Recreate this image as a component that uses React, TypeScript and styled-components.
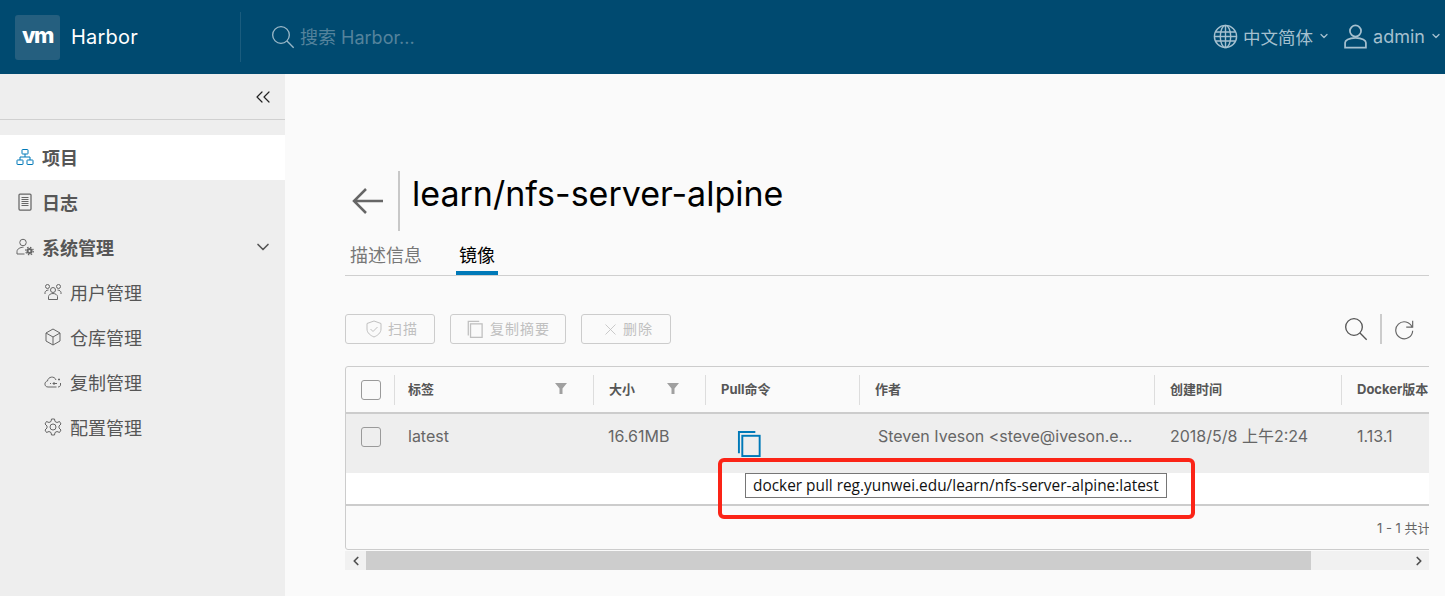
import React from 'react';
import styled, { createGlobalStyle } from 'styled-components';
import { ChevronDown, ChevronLeft, ChevronRight, ChevronsLeft } from 'lucide-react';

const GlobalStyle = createGlobalStyle`
	html, body {
		margin: 0;
		padding: 0;
		height: 596px;
		overflow: hidden;
		background: #fafafa;
		font-family: Inter, 'Noto Sans CJK SC', sans-serif;
	}
`;

type IconProps = { size?: number; color?: string };

const Line: React.FC<IconProps & { children: React.ReactNode; box?: number }> = ({
	size = 18,
	color = '#666',
	box = 36,
	children,
}) => (
	<svg width={size} height={size} viewBox={`0 0 ${box} ${box}`} fill="none" stroke={color} strokeWidth={2}>
		{children}
	</svg>
);

const SearchIcon: React.FC<IconProps> = (p) => (
	<Line {...p}>
		<circle cx="15" cy="15" r="12.5" />
		<path d="M24 24l10 10" />
	</Line>
);

const GlobeIcon: React.FC<IconProps> = (p) => (
	<Line {...p}>
		<circle cx="18" cy="18" r="16" />
		<ellipse cx="18" cy="18" rx="7.5" ry="16" />
		<path d="M18 2v32M3.5 11.5h29M3.5 24.5h29M2 18h32" />
	</Line>
);

const UserIcon: React.FC<IconProps> = (p) => (
	<Line {...p}>
		<circle cx="18" cy="10" r="8" strokeWidth={2.500} />
		<path d="M3 34v-7c0-3 5-7 15-7s15 4 15 7v7z" strokeWidth={2.500} />
	</Line>
);

const ProjectIcon: React.FC<IconProps> = (p) => (
	<Line {...p}>
		<rect x="12" y="3" width="12" height="9" rx="1" />
		<rect x="2" y="24" width="12" height="9" rx="1" />
		<rect x="22" y="24" width="12" height="9" rx="1" />
		<path d="M18 12v6M8 24v-6h20v6" />
	</Line>
);

const LogIcon: React.FC<IconProps> = (p) => (
	<Line {...p}>
		<rect x="6" y="2" width="24" height="32" rx="2" strokeWidth={2.500} />
		<path d="M11 9h14M11 13h14M11 17h14M11 21h14M11 25h14" />
	</Line>
);

const AdminIcon: React.FC<IconProps> = (p) => (
	<Line {...p}>
		<circle cx="14" cy="9" r="6.500" />
		<path d="M2 32v-5c0-5 6-8.500 13-8.500M2 32h15" />
		<circle cx="27" cy="26" r="4" strokeWidth={4} />
		<circle cx="27" cy="26" r="7.500" strokeDasharray="3 2.900" strokeWidth={2.500} />
	</Line>
);

const UsersIcon: React.FC<IconProps> = (p) => (
	<Line {...p}>
		<circle cx="18" cy="14" r="5" />
		<circle cx="7" cy="7" r="4" />
		<circle cx="29" cy="7" r="4" />
		<path d="M9 33v-6c0-3 4-6 9-6s9 3 9 6v6zM2 22v-3c0-2 3-5 7-5M34 22v-3c0-2-3-5-7-5" />
	</Line>
);

const BoxIcon: React.FC<IconProps> = (p) => (
	<Line {...p}>
		<path d="M18 2l14 8v16l-14 8-14-8V10zM4 10l14 8 14-8M18 18v16" />
	</Line>
);

const CloudIcon: React.FC<IconProps> = (p) => (
	<Line {...p}>
		<path d="M25 28H8c-8 0-8-11-1-12 1-9 14-11 17-2M30 15v-4M28 13h4" />
		<path d="M33 20v4c0 2-2 4-5 4M26 21h-8M21 18l-3 3 3 3M12 21h2" />
	</Line>
);

const GearIcon: React.FC<IconProps> = (p) => (
	<Line {...p}>
		<circle cx="18" cy="18" r="6" />
		<path d="M15 2h6l1 5 4 2 5-2 3 5-4 4v4l4 4-3 5-5-2-4 2-1 5h-6l-1-5-4-2-5 2-3-5 4-4v-4l-4-4 3-5 5 2 4-2z" />
	</Line>
);

const ArrowIcon: React.FC<IconProps> = (p) => (
	<svg width={p.size} height={p.size} viewBox="0 0 32 32" fill="none" stroke={p.color} strokeWidth={2.500}>
		<path d="M31 16H2M14 4L2 16l12 12" />
	</svg>
);

const ShieldIcon: React.FC<IconProps> = (p) => (
	<Line {...p}>
		<path d="M18 2l14 5v11c0 8-7 13-14 16C11 31 4 26 4 18V7z" />
		<path d="M11 18l5 5 9-9" />
	</Line>
);

const CopyIcon: React.FC<IconProps> = (p) => (
	<Line {...p} box={28}>
		<path d="M2 24V2h17" />
		<rect x="5.500" y="6" width="18" height="21" />
	</Line>
);

const CloseIcon: React.FC<IconProps> = (p) => (
	<Line {...p}>
		<path d="M6 6l24 24M30 6L6 30" />
	</Line>
);

const RefreshIcon: React.FC<IconProps> = (p) => (
	<Line {...p}>
		<path d="M31 14A14.500 14.500 0 1 0 32 20" />
		<path d="M32 3v11H21" />
	</Line>
);

const FilterIcon: React.FC = () => (
	<svg width={12} height={11} viewBox="0 0 12 11" fill="#a0a0a0">
		<path d="M0 0h12L7.500 5.500V11h-3V5.500z" />
	</svg>
);

const Page = styled.div`
	width: 1445px;
	height: 596px;
	display: flex;
	flex-direction: column;
	position: relative;
	overflow: hidden;
`;

const Header = styled.header`
	height: 74px;
	flex: none;
	background: #004a70;
	display: flex;
	align-items: center;
`;

const Brand = styled.div`
	width: 225px;
	padding-left: 15px;
	height: 50px;
	display: flex;
	align-items: center;
	gap: 11px;
	border-right: 1px solid #1a5c7e;
	box-sizing: content-box;
	color: #fff;
	font-size: 20px;
	letter-spacing: 0.200px;
`;

const LogoBox = styled.div`
	width: 45px;
	height: 45px;
	border-radius: 3px;
	background: #255f7f;
	display: flex;
	align-items: center;
	justify-content: center;
	color: #fff;
`;

const Search = styled.div`
	margin-left: 30px;
	padding-bottom: 2px;
	display: flex;
	align-items: center;
	gap: 5px;
	flex: 1;
	color: #55839c;
	font-size: 18px;
`;

const SearchGlass = styled.span`
	display: flex;
	margin-top: 2px;
`;

const HeaderMenu = styled.div<{ $gap: number; $right: number; $size: number }>`
	display: flex;
	align-items: center;
	gap: ${(p) => p.$gap}px;
	margin-right: ${(p) => p.$right}px;
	padding-bottom: 2px;
	color: #a5c0cf;
	font-size: ${(p) => p.$size}px;
`;

const Body = styled.div`
	flex: 1;
	display: flex;
	min-height: 0;
`;

const Sidebar = styled.aside`
	width: 285px;
	flex: none;
	background: #eeeeee;
`;

const Collapse = styled.div`
	height: 45px;
	border-bottom: 1px solid #d0d0d0;
	margin-bottom: 15px;
	display: flex;
	align-items: center;
	justify-content: flex-end;
	padding-right: 10px;
	color: #222;
`;

const NavItem = styled.div<{ $active?: boolean; $sub?: boolean }>`
	height: 45px;
	box-sizing: border-box;
	padding-bottom: 2px;
	display: flex;
	align-items: center;
	gap: 8px;
	padding-left: ${(p) => (p.$sub ? 44 : 16)}px;
	padding-right: 12px;
	background: ${(p) => (p.$active ? '#fff' : 'transparent')};
	color: #565656;
	font-size: 18px;
	font-weight: ${(p) => (p.$sub ? 400 : 700)};
`;

const NavGrow = styled.span`
	flex: 1;
`;

const Main = styled.main`
	flex: 1;
	min-width: 0;
	padding: 96px 16px 0 60px;
`;

const TitleRow = styled.div`
	height: 61px;
	display: flex;
	align-items: center;
	padding-left: 7px;
`;

const TitleDivider = styled.div`
	width: 2px;
	height: 60px;
	background: #c8c8c8;
	margin: 0 12px 0 14px;
`;

const Title = styled.h1`
	margin: 0 0 14px;
	font-size: 34px;
	font-weight: 400;
	color: #000;
	letter-spacing: 0;
`;

const Tabs = styled.div`
	height: 35px;
	margin-top: 9px;
	display: flex;
	gap: 26px;
	padding-left: 5px;
	border-bottom: 1px solid #cfcfcf;
`;

const Tab = styled.div<{ $active?: boolean }>`
	height: 35px;
	box-sizing: border-box;
	padding: 0 ${(p) => (p.$active ? 3 : 0)}px;
	margin-left: ${(p) => (p.$active ? 8 : 0)}px;
	font-size: 18px;
	line-height: 31px;
	color: ${(p) => (p.$active ? '#000' : '#777')};
	border-bottom: ${(p) => (p.$active ? '4px solid #0079b8' : 'none')};
`;

const Toolbar = styled.div`
	height: 30px;
	margin-top: 38px;
	display: flex;
	align-items: center;
	gap: 15px;
`;

const ActionButton = styled.button<{ $left: number; $right: number }>`
	height: 30px;
	padding: 0 ${(p) => p.$right}px 0 ${(p) => p.$left}px;
	box-sizing: border-box;
	display: flex;
	align-items: center;
	gap: 5px;
	background: transparent;
	border: 1px solid #cccccc;
	border-radius: 3px;
	font-family: inherit;
	font-size: 14px;
	letter-spacing: 1px;
	color: #c0c0c0;
`;

const ActionLabel = styled.span`
	margin-top: -3px;
`;

const ToolbarEnd = styled.div`
	margin-left: auto;
	display: flex;
	align-items: center;
	padding-right: 14px;
	gap: 12px;
`;

const ToolbarDivider = styled.div`
	width: 2px;
	height: 30px;
	background: #cccccc;
`;

const TableClip = styled.div`
	margin-top: 22px;
	overflow: hidden;
`;

const Card = styled.div`
	width: 1300px;
	height: 182px;
	border: 1px solid #cccccc;
	border-radius: 3px;
	display: flex;
	flex-direction: column;
`;

const COLUMNS = '48px 199px 112px 154px 295px 187px 1fr';

const HeadRow = styled.div`
	height: 45px;
	flex: none;
	display: grid;
	grid-template-columns: ${COLUMNS};
	align-items: center;
	border-bottom: 2px solid #cccccc;
`;

const HeadCell = styled.div<{ $first?: boolean }>`
	height: 30px;
	padding-bottom: 2px;
	display: flex;
	align-items: center;
	justify-content: space-between;
	box-sizing: border-box;
	padding-right: 26px;
	padding-left: ${(p) => (p.$first ? 13 : 15)}px;
	border-left: 1px solid #dddddd;
	font-size: 13px;
	font-weight: 700;
	color: #565656;
	white-space: nowrap;
`;

const CheckCell = styled.div`
	display: flex;
	justify-content: flex-start;
	padding-left: 15px;
`;

const CheckBox = styled.div`
	width: 20px;
	height: 20px;
	box-sizing: border-box;
	border: 1px solid #9a9a9a;
	border-radius: 3px;
`;

const DataRow = styled(HeadRow)`
	height: 59px;
	align-items: flex-start;
	background: #eeeeee;
	border-bottom: none;
	padding-top: 13px;
	box-sizing: border-box;
	font-size: 16px;
	color: #666;
	white-space: nowrap;
`;

const DataCell = styled.div<{ $inset?: number }>`
	padding-left: ${(p) => p.$inset ?? 16}px;
	line-height: 18px;
`;

const IconCell = styled(DataCell)`
	padding-top: 3px;
	line-height: 0;
`;

const BlankRow = styled.div`
	height: 31px;
	flex: none;
	background: #fff;
	border-bottom: 2px solid #cccccc;
`;

const TableFooter = styled.div`
	flex: 1;
	display: flex;
	align-items: center;
	padding-left: 1031px;
	font-size: 13px;
	color: #666;
	white-space: nowrap;
`;

const ScrollBar = styled.div`
	height: 19px;
	margin-top: 1px;
	display: flex;
	background: #f1f1f1;
`;

const ScrollArrow = styled.div`
	width: 21px;
	flex: none;
	display: flex;
	align-items: center;
	justify-content: center;
	color: #505050;
`;

const ScrollThumb = styled.div`
	width: 945px;
	flex: none;
	background: #cdcdcd;
`;

const ScrollGap = styled.div`
	flex: 1;
`;

/* annotation drawn on top of the screenshot */
const RedMark = styled.div`
	position: absolute;
	left: 718px;
	top: 458px;
	width: 477px;
	height: 61px;
	box-sizing: border-box;
	border: 4px solid #fb2417;
	border-radius: 6px;
`;

const PullPopup = styled.div`
	position: absolute;
	left: 745px;
	top: 473px;
	width: 422px;
	height: 25px;
	box-sizing: border-box;
	background: #fff;
	border: 1px solid #767676;
	font-family: 'Open Sans', sans-serif;
	font-size: 15.400px;
	line-height: 24px;
	padding-left: 7px;
	color: #111;
	white-space: nowrap;
`;

const VmLogo = styled.span`
	font-size: 22px;
	font-weight: 800;
	letter-spacing: -1.400px;
	margin-top: -4px;
`;

const App: React.FC = () => (
	<Page>
		<GlobalStyle />
		<Header>
			<Brand>
				<LogoBox>
					<VmLogo>vm</VmLogo>
				</LogoBox>
				Harbor
			</Brand>
			<Search>
				<SearchGlass>
					<SearchIcon size={24} color="#9ab8c8" />
				</SearchGlass>
				搜索 Harbor...
			</Search>
			<HeaderMenu $gap={5} $right={13} $size={17.500}>
				<GlobeIcon size={25} color="#a5c0cf" />
				中文简体
				<ChevronDown size={12} strokeWidth={2.500} />
			</HeaderMenu>
			<HeaderMenu $gap={5} $right={3} $size={18}>
				<UserIcon size={25} color="#a5c0cf" />
				admin
				<ChevronDown size={12} strokeWidth={2.500} />
			</HeaderMenu>
		</Header>
		<Body>
			<Sidebar>
				<Collapse>
					<ChevronsLeft size={24} strokeWidth={1.200} />
				</Collapse>
				<NavItem $active>
					<ProjectIcon color="#0079b8" />
					项目
				</NavItem>
				<NavItem>
					<LogIcon />
					日志
				</NavItem>
				<NavItem>
					<AdminIcon />
					系统管理
					<NavGrow />
					<ChevronDown size={20} color="#555" />
				</NavItem>
				<NavItem $sub>
					<UsersIcon />
					用户管理
				</NavItem>
				<NavItem $sub>
					<BoxIcon />
					仓库管理
				</NavItem>
				<NavItem $sub>
					<CloudIcon />
					复制管理
				</NavItem>
				<NavItem $sub>
					<GearIcon />
					配置管理
				</NavItem>
			</Sidebar>
			<Main>
				<TitleRow>
					<ArrowIcon size={32} color="#666" />
					<TitleDivider />
					<Title>learn/nfs-server-alpine</Title>
				</TitleRow>
				<Tabs>
					<Tab>描述信息</Tab>
					<Tab $active>镜像</Tab>
				</Tabs>
				<Toolbar>
					<ActionButton $left={19} $right={16}>
						<ShieldIcon size={18} color="#c0c0c0" />
						<ActionLabel>扫描</ActionLabel>
					</ActionButton>
					<ActionButton $left={16} $right={15}>
						<CopyIcon size={18} color="#c0c0c0" />
						<ActionLabel>复制摘要</ActionLabel>
					</ActionButton>
					<ActionButton $left={21} $right={17}>
						<CloseIcon size={15} color="#c0c0c0" />
						<ActionLabel>删除</ActionLabel>
					</ActionButton>
					<ToolbarEnd>
						<SearchIcon size={24} color="#555" />
						<ToolbarDivider />
						<RefreshIcon size={21} color="#666" />
					</ToolbarEnd>
				</Toolbar>
				<TableClip>
					<Card>
						<HeadRow>
							<CheckCell>
								<CheckBox />
							</CheckCell>
							<HeadCell $first>
								标签
								<FilterIcon />
							</HeadCell>
							<HeadCell>
								大小
								<FilterIcon />
							</HeadCell>
							<HeadCell>Pull命令</HeadCell>
							<HeadCell>作者</HeadCell>
							<HeadCell>创建时间</HeadCell>
							<HeadCell>Docker版本</HeadCell>
						</HeadRow>
						<DataRow>
							<CheckCell>
								<CheckBox />
							</CheckCell>
							<DataCell $inset={14}>latest</DataCell>
							<DataCell $inset={15}>16.61MB</DataCell>
							<IconCell $inset={32}>
								<CopyIcon size={27} color="#0079b8" />
							</IconCell>
							<DataCell $inset={19}>Steven Iveson &lt;steve@iveson.e...</DataCell>
							<DataCell>2018/5/8 上午2:24</DataCell>
							<DataCell>1.13.1</DataCell>
						</DataRow>
						<BlankRow />
						<TableFooter>1 - 1 共计 1 条记录</TableFooter>
					</Card>
				</TableClip>
				<ScrollBar>
					<ScrollArrow>
						<ChevronLeft size={14} strokeWidth={3} />
					</ScrollArrow>
					<ScrollThumb />
					<ScrollGap />
					<ScrollArrow>
						<ChevronRight size={14} strokeWidth={3} />
					</ScrollArrow>
				</ScrollBar>
			</Main>
		</Body>
		<RedMark />
		<PullPopup>docker pull reg.yunwei.edu/learn/nfs-server-alpine:latest</PullPopup>
	</Page>
);

export default App;
